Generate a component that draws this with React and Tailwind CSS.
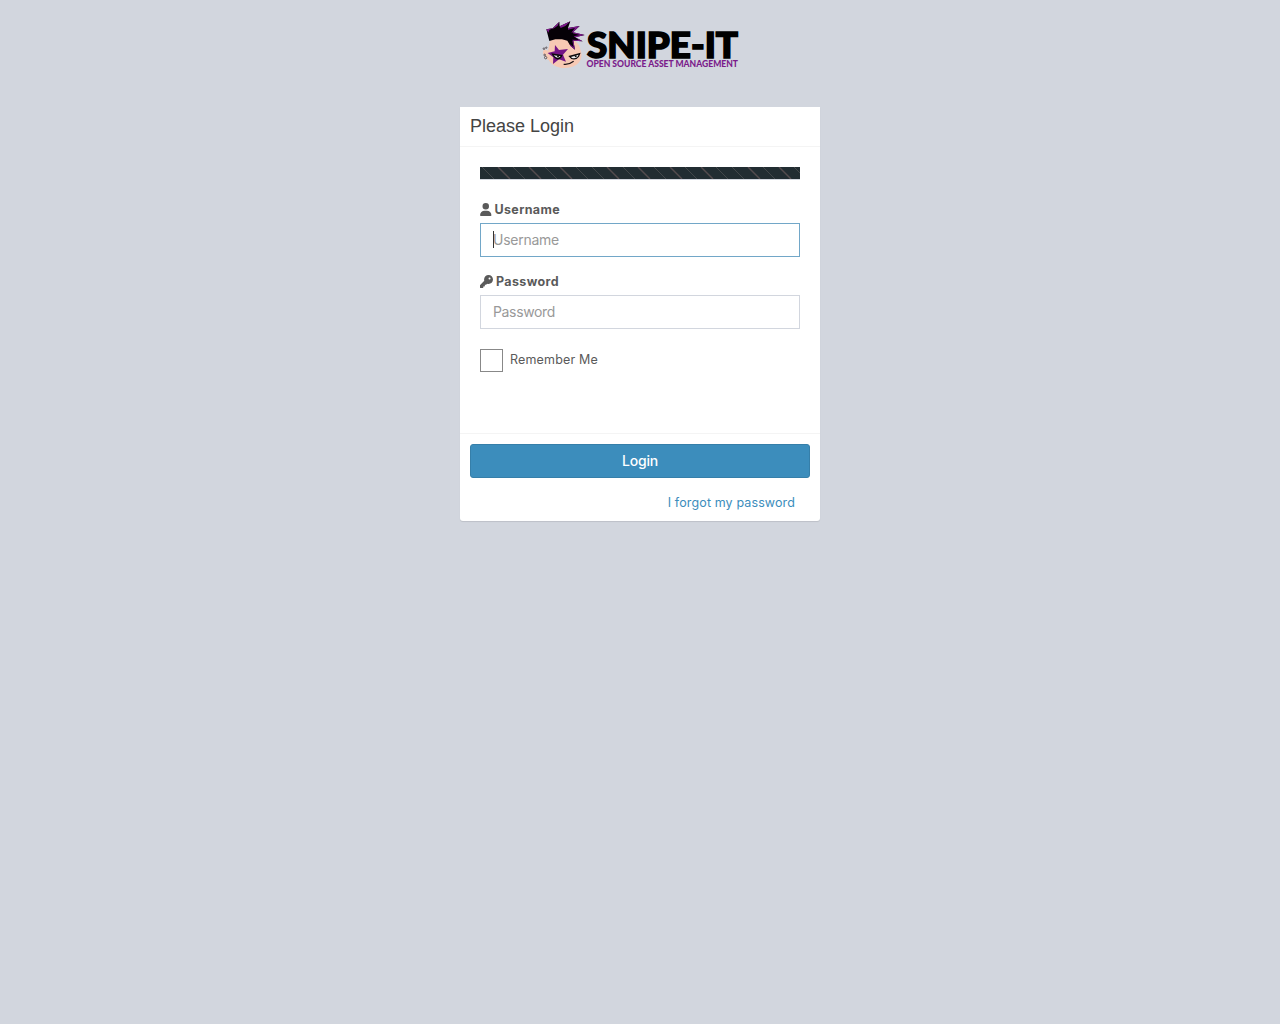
import React from "react";

const stripes = [
  [2, 0], [18, 1], [33, 0], [49, 1], [65, 0], [80, 1], [96, 0], [112, 0], [127, 1], [143, 0],
  [158, 1], [174, 0], [190, 1], [205, 0], [221, 1], [236, 0], [252, 0], [268, 1], [283, 0], [299, 1], [314, 0],
];

function Logo() {
  return (
    <svg width="200" height="52" viewBox="0 0 200 52" role="img" aria-label="Snipe-IT">
      <g transform="translate(-4 -6) scale(0.33333)">
        <path d="M42 82 C55 68 112 62 130 96 L136 116 C139 136 128 153 106 159 C78 168 48 157 38 138 C26 132 18 118 22 110 C26 105 32 108 36 111Z" fill="#f7c9b4" />
        <path d="M40 81 L31 46 L50 43 L70 23 L71 37 L103 22 L96 42 L131 36 L111 55 L146 63 L118 70 L140 82 L112 80 L117 107 L103 95 L94 80 L78 76 L58 76Z" fill="#050106" />
        <path d="M31 46 L50 43 L40 48 L37 56Z M70 23 L65 35 L54 43 L48 45Z M103 22 L88 36 L74 42 L71 37Z M131 36 L111 55 L106 56 L117 42 L96 47 L96 42Z M146 63 L118 70 L113 67 L132 63 L111 58 L111 55Z M140 82 L112 80 L108 77 L129 78 L118 70Z M117 107 L103 95 L100 89 L113 100 L109 80 L112 80Z" fill="#7b188a" />
        <path d="M57 93 L69 108 L96 105 L81 122 L90 143 L69 136 L51 150 L52 130 L35 117 L56 112Z" fill="#741486" />
        <path d="M46 118 L80 123 Q75 138 62 136 Q52 132 46 118Z M97 126 L134 116 L129 128 Q120 140 106 135Z" fill="#0b090b" />
        <path d="M53 124 L74 127 Q68 133 60 130Z M105 129 L128 122 L124 129 Q117 135 108 132Z" fill="#eee" />
        <circle cx="66" cy="127" r="3" fill="#111" /><circle cx="119" cy="127" r="3" fill="#111" />
        <path d="M83 151 Q99 153 113 142" fill="none" stroke="#191014" strokeWidth="3.5" />
        <g fill="#e5e5e5" stroke="#474047" strokeWidth="2.5">
          <circle cx="24" cy="104" r="2.5" /><circle cx="31" cy="101" r="2" /><circle cx="26" cy="123" r="2.5" /><circle cx="29" cy="131" r="3.5" />
        </g>
      </g>
      <text x="47" y="38.2" textLength="151" lengthAdjust="spacingAndGlyphs" fontFamily="Lato" fontWeight="900" fontSize="35.5" stroke="#000" strokeWidth="1.6">SNIPE-IT</text>
      <text x="46.5" y="46.7" textLength="151.5" lengthAdjust="spacingAndGlyphs" fontFamily="Lato" fontWeight="900" fontSize="9.3" fill="#7b1c8b">OPEN SOURCE ASSET MANAGEMENT</text>
    </svg>
  );
}

export default function App() {
  return (
    <main className="flex min-h-screen flex-col items-center bg-[#d2d6de] pt-5 font-['Inter',sans-serif] text-[13px] leading-[18px] text-[#5a5a5a]">
      <Logo />
      <form className="mt-[35px] h-[414px] w-[360px] rounded-b-[3px] bg-white shadow-[0_1px_1px_rgba(0,0,0,0.1)]">
        <header className="flex h-10 items-center border-b border-[#f4f4f4] px-2.5 pb-0.5">
          <h1 className="font-['Liberation_Sans',sans-serif] text-[18px] leading-[18px] text-[#444]">Please Login</h1>
        </header>
        <div className="h-[286px] px-5 pt-5">
          <div className="h-[13px] border-b border-[#d2d6de] bg-[#222d32]">
            <svg width="320" height="12" className="block">
              {stripes.map(([x, thick]) => (
                <path key={x} d={`M${x} 0l12 12`} stroke={thick ? "#544c4e" : "#4e5053"} strokeWidth={thick ? 1.4 : 0.75} />
              ))}
            </svg>
          </div>
          <label className="mt-5 flex h-[18px] items-center text-[12.5px] font-bold tracking-[0.36px]" htmlFor="username">
            <svg width="11.5" height="13" viewBox="0 0 448 512" className="mr-[3px]" fill="currentColor"><path d="M224 256A128 128 0 1 0 224 0a128 128 0 1 0 0 256zm-45.7 48C79.8 304 0 383.8 0 482.300 0 498.700 13.300 512 29.700 512h388.600c16.400 0 29.700-13.300 29.700-29.700 0-98.500-79.800-178.300-178.300-178.300h-91.400z" /></svg>
            <span className="pt-0.5">Username</span>
          </label>
          <div className="relative mt-[5px]">
            <input id="username" placeholder="Username" className="block h-[34px] w-full border border-[#72a7c8] px-3 pb-0.5 text-[14px] tracking-[-0.25px] outline-none placeholder:text-[#999]" />
            <span className="absolute left-[13px] top-2 h-[17px] w-px bg-[#333]" />
          </div>
          <label className="mt-[15px] flex h-[18px] items-center text-[12.5px] font-bold tracking-[0.36px]" htmlFor="password">
            <svg width="13" height="13" viewBox="0 0 512 512" className="mr-[3px]" fill="currentColor"><path d="M336 352c97.200 0 176-78.800 176-176S433.200 0 336 0 160 78.800 160 176c0 18.700 2.900 36.800 8.300 53.700L7 391c-4.500 4.500-7 10.600-7 17v80c0 13.300 10.700 24 24 24h80c13.300 0 24-10.700 24-24v-40h40c13.300 0 24-10.700 24-24v-40h40c6.400 0 12.500-2.500 17-7l33.300-33.300c16.900 5.400 35 8.300 53.700 8.300zM376 96a40 40 0 1 1 0 80 40 40 0 1 1 0-80z" /></svg>
            <span className="pt-0.5">Password</span>
          </label>
          <input id="password" type="password" placeholder="Password" className="mt-[5px] block h-[34px] w-full border border-[#d2d6de] px-3 pb-0.5 text-[14px] tracking-[-0.35px] outline-none placeholder:text-[#999]" />
          <label className="mt-5 flex items-center text-[12.5px] tracking-[0.17px]">
            <input type="checkbox" className="mr-[7px] size-[23px] appearance-none border border-[#888] bg-white" />
            <span className="-mt-px">Remember Me</span>
          </label>
        </div>
        <footer className="border-t border-[#f4f4f4] p-2.5">
          <button type="button" className="block h-[34px] w-full rounded-[3px] border border-[#367fa9] bg-[#3c8dbc] text-[14px] font-medium tracking-[-0.2px] text-white">Login</button>
          <div className="mt-4 pr-[15px] text-right text-[12.5px] tracking-[0.12px]"><a href="#" className="text-[#3c8dbc]">I forgot my password</a></div>
        </footer>
      </form>
    </main>
  );
}
